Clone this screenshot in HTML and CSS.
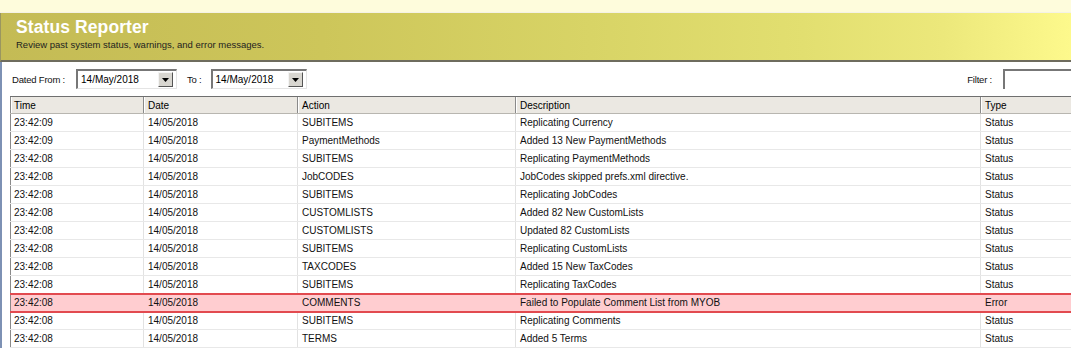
FILE: index.html
```html
<!DOCTYPE html>
<html>
<head>
<meta charset="utf-8">
<link rel="stylesheet" href="styles.css">
</head>
<body>
<div class="topband"></div>
<div class="banner">
  <div class="title">Status Reporter</div>
  <div class="subtitle">Review past system status, warnings, and error messages.</div>
</div>
<div class="panel">
  <div class="controls">
    <span class="label">Dated From :</span>
    <div class="combo combo-from"><span class="combo-text">14/May/2018</span><span class="drop"><svg width="7" height="4" viewBox="0 0 7 4"><path d="M0 0H7L3.5 4Z" fill="#000"/></svg></span></div>
    <span class="label label-to">To :</span>
    <div class="combo combo-to"><span class="combo-text">14/May/2018</span><span class="drop"><svg width="7" height="4" viewBox="0 0 7 4"><path d="M0 0H7L3.5 4Z" fill="#000"/></svg></span></div>
    <span class="spacer"></span>
    <span class="label">Filter :</span>
    <div class="filter"></div>
  </div>
  <table class="grid">
    <colgroup>
      <col class="c-time"><col class="c-date"><col class="c-action"><col class="c-desc"><col class="c-type">
    </colgroup>
    <thead>
      <tr><th>Time</th><th>Date</th><th>Action</th><th>Description</th><th>Type</th></tr>
    </thead>
    <tbody>
      <tr><td>23:42:09</td><td>14/05/2018</td><td>SUBITEMS</td><td>Replicating Currency</td><td>Status</td></tr>
      <tr><td>23:42:09</td><td>14/05/2018</td><td>PaymentMethods</td><td>Added 13 New PaymentMethods</td><td>Status</td></tr>
      <tr><td>23:42:08</td><td>14/05/2018</td><td>SUBITEMS</td><td>Replicating PaymentMethods</td><td>Status</td></tr>
      <tr><td>23:42:08</td><td>14/05/2018</td><td>JobCODES</td><td>JobCodes skipped prefs.xml directive.</td><td>Status</td></tr>
      <tr><td>23:42:08</td><td>14/05/2018</td><td>SUBITEMS</td><td>Replicating JobCodes</td><td>Status</td></tr>
      <tr><td>23:42:08</td><td>14/05/2018</td><td>CUSTOMLISTS</td><td>Added 82 New CustomLists</td><td>Status</td></tr>
      <tr><td>23:42:08</td><td>14/05/2018</td><td>CUSTOMLISTS</td><td>Updated 82 CustomLists</td><td>Status</td></tr>
      <tr><td>23:42:08</td><td>14/05/2018</td><td>SUBITEMS</td><td>Replicating CustomLists</td><td>Status</td></tr>
      <tr><td>23:42:08</td><td>14/05/2018</td><td>TAXCODES</td><td>Added 15 New TaxCodes</td><td>Status</td></tr>
      <tr><td>23:42:08</td><td>14/05/2018</td><td>SUBITEMS</td><td>Replicating TaxCodes</td><td>Status</td></tr>
      <tr class="error"><td>23:42:08</td><td>14/05/2018</td><td>COMMENTS</td><td>Failed to Populate Comment List from MYOB</td><td>Error</td></tr>
      <tr><td>23:42:08</td><td>14/05/2018</td><td>SUBITEMS</td><td>Replicating Comments</td><td>Status</td></tr>
      <tr><td>23:42:08</td><td>14/05/2018</td><td>TERMS</td><td>Added 5 Terms</td><td>Status</td></tr>
    </tbody>
  </table>
</div>
</body>
</html>
```
FILE: styles.css
```css
* { box-sizing: border-box; }
html, body { margin: 0; padding: 0; }
body {
  width: 1071px;
  height: 348px;
  overflow: hidden;
  background: #fff;
  font-family: "Liberation Sans", Arial, sans-serif;
  font-size: 10px;
  color: #000;
}
.topband {
  height: 13px;
  background: #fefcdc;
  border-bottom: 1px solid #f4f2e6;
}
.banner {
  height: 49px;
  padding: 3px 0 0 15px;
  background: linear-gradient(to right, #c4bb55 0%, #cdc65a 30%, #d8d466 55%, #e2df70 75%, #ece87b 88%, #fdf98c 100%);
  border-bottom: 2px solid #6e6c5e;
  border-left: 1px solid #9a9660;
}
.title {
  color: #fff;
  font-weight: bold;
  font-size: 17.5px;
  line-height: 22px;
  letter-spacing: 0.1px;
}
.subtitle {
  font-size: 9.5px;
  line-height: 12px;
  margin-top: 1px;
  color: #1e1e1e;
}
.panel {
  border-left: 2px solid #7d91b4;
  height: 286px;
  padding-top: 7px;
}
.controls {
  display: flex;
  align-items: center;
  height: 20px;
  padding-left: 10px;
}
.label {
  font-size: 9.5px;
  color: #111;
  margin-right: 11px;
  letter-spacing: -0.2px;
}
.label-to { margin-left: 10px; margin-right: 9px; }
.combo {
  display: flex;
  align-items: center;
  justify-content: space-between;
  height: 20px;
  background: #fff;
  border-top: 2px solid #777;
  border-left: 2px solid #777;
  border-bottom: 1px solid #e4e4e4;
  border-right: 1px solid #e4e4e4;
  padding: 0 3px 0 3px;
}
.combo-from { width: 101px; }
.combo-to { width: 96px; }
.combo-text { font-size: 10px; }
.drop {
  display: flex;
  align-items: center;
  justify-content: center;
  width: 15px;
  height: 15px;
  background: #d8d6d0;
  border-top: 1px solid #f4f4f4;
  border-left: 1px solid #f4f4f4;
  border-right: 1px solid #555;
  border-bottom: 1px solid #555;
}
.spacer { flex: 1; }
.filter {
  width: 68px;
  height: 20px;
  background: #fff;
  border-top: 2px solid #777;
  border-left: 2px solid #777;
}
.grid {
  margin-top: 7px;
  margin-left: 8px;
  width: 1061px;
  table-layout: fixed;
  border-collapse: collapse;
  border-left: 1px solid #8a8a8a;
}
.c-time { width: 133px; }
.c-date { width: 154px; }
.c-action { width: 218px; }
.c-desc { width: 465px; }
.c-type { width: 91px; }
.grid th {
  height: 17px;
  padding: 0 4px;
  text-align: left;
  font-weight: normal;
  font-size: 10px;
  background: #ebe8e2;
  border-top: 1px solid #6f6f6f;
  border-bottom: 1px solid #b8b6b0;
  border-left: 1px solid #8a8a8a;
  box-shadow: inset 1px 0 0 #fff;
  white-space: nowrap;
}
.grid th:first-child { border-left: none; padding-left: 3px; }
.grid td {
  height: 18px;
  padding: 0 4px;
  font-size: 10px;
  white-space: nowrap;
  overflow: hidden;
  border-bottom: 1px solid #e8e8e8;
  border-left: 1px solid #e2e2e2;
  color: #111;
}
.grid td:first-child { border-left: none; padding-left: 3px; }
.grid tr.error td {
  background: #ffcdd0;
  border-top: 2px solid #e24a4f;
  border-bottom: 2px solid #e24a4f;
  border-left-color: #ffcdd0;
}
```
